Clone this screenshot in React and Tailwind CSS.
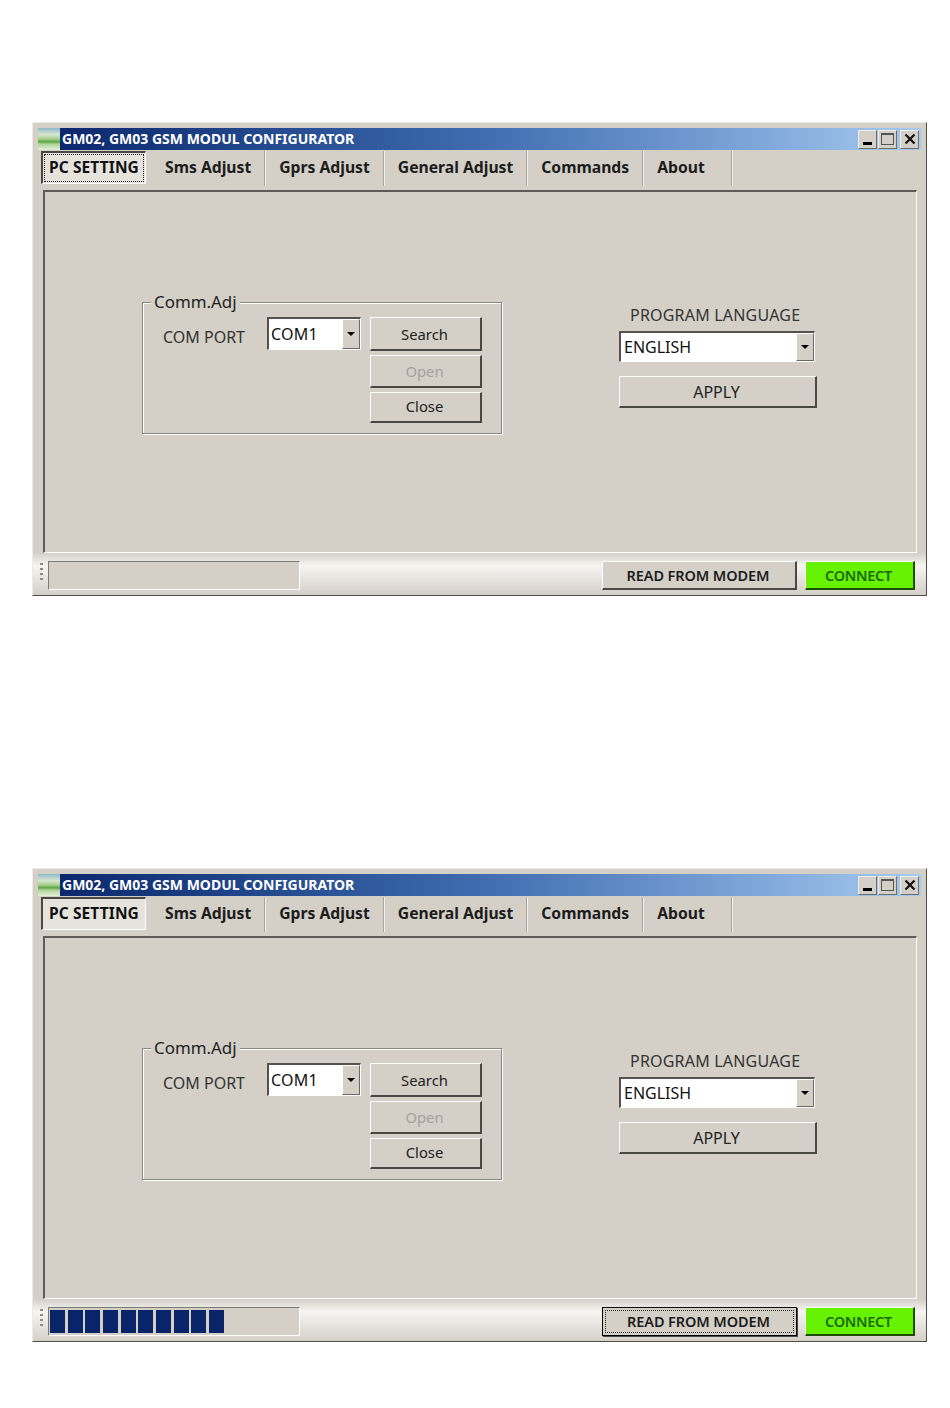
import React from 'react';

const tabs = [
  { label: 'Sms Adjust', pad: 'pl-[14px] pr-[13px]' },
  { label: 'Gprs Adjust', pad: 'pl-[14px] pr-[13px]' },
  { label: 'General Adjust', pad: 'pl-[14px] pr-[13px]' },
  { label: 'Commands', pad: 'pl-[14px] pr-[13px]' },
  { label: 'About', pad: 'pl-[14px] pr-[26px]' },
];
const raised = 'border-t border-l border-t-white border-l-white border-r-2 border-b-2 border-r-[#4a4845] border-b-[#4a4845]';
const font = 'font-["Noto_Sans",sans-serif]';

function AppIcon() {
  return (
    <svg width="22" height="22" viewBox="0 0 22 22" className="shrink-0">
      <defs>
        <linearGradient id="appicon" x1="0" y1="0" x2="0" y2="1">
          <stop offset="0" stopColor="#8fb8c8" />
          <stop offset="0.3" stopColor="#d6e6cf" />
          <stop offset="0.5" stopColor="#a8d08c" />
          <stop offset="0.62" stopColor="#5fa845" />
          <stop offset="0.75" stopColor="#b4d6a0" />
          <stop offset="1" stopColor="#e2efd8" />
        </linearGradient>
      </defs>
      <rect width="22" height="22" fill="url(#appicon)" />
    </svg>
  );
}

function CaptionButton({ children, className = '' }) {
  return (
    <div className={`w-[19px] h-[19px] flex items-center justify-center bg-[#d4d0c8] border-t border-l border-t-[#f0eeea] border-l-[#f0eeea] border-r border-b border-r-[#6f6d69] border-b-[#6f6d69] ${className}`}>
      {children}
    </div>
  );
}

function TitleBar() {
  return (
    <div className="h-[22px] flex items-center bg-gradient-to-r from-[#0a246a] via-[#3f6cb0] via-50% to-[#a6caf0]">
      <AppIcon />
      <span className="ml-[2px] text-white font-bold text-[14px] leading-none">GM02, GM03 GSM MODUL CONFIGURATOR</span>
      <div className="ml-auto mr-[2px] flex items-center gap-[1px]">
        <CaptionButton>
          <div className="w-[9px] h-[3px] bg-black mt-[8px]" />
        </CaptionButton>
        <CaptionButton>
          <div className="w-[13px] h-[12px] border border-[#555] border-t-2" />
        </CaptionButton>
        <CaptionButton className="ml-[2px]">
          <svg width="12" height="12" viewBox="0 0 12 12">
            <path d="M1.5 1.5 L10.5 10.5 M10.5 1.5 L1.5 10.5" stroke="#111" strokeWidth="2.2" />
          </svg>
        </CaptionButton>
      </div>
    </div>
  );
}

function TabBar({ dotted }) {
  return (
    <div className="h-[36px] flex items-start pt-px">
      <div className="ml-[3px] w-[105px] h-[33px] p-px bg-[#e6e3dd] border-t-2 border-l-2 border-t-[#4a4845] border-l-[#4a4845] border-r border-b border-r-white border-b-white">
        <div className={`h-full flex items-center justify-center border border-dotted ${dotted ? 'border-[#222]' : 'border-transparent'} text-[15.5px] font-bold text-[#111] tracking-[0.1px]`}>
          PC SETTING
        </div>
      </div>
      <div className="w-[5px]" />
      {tabs.map(t => (
        <div key={t.label} className={`h-[35px] pb-[2px] ${t.pad} flex items-center border-r border-r-[#a9a59d] shadow-[1px_0_0_#f2f0ec] text-[15.7px] font-bold text-[#1c1c1c]`}>
          {t.label}
        </div>
      ))}
    </div>
  );
}

function Combo({ label, w, h, textClass = '' }) {
  return (
    <div className={`${w} ${h} flex items-stretch bg-white border-t-2 border-l-2 border-t-[#55524e] border-l-[#55524e] border-b border-r border-b-white border-r-white`}>
      <span className={`flex-1 flex items-center text-[16px] text-[#111] leading-none ${textClass}`}>{label}</span>
      <div className="w-[18px] flex items-center justify-center bg-[#d4d0c8] border border-[#6b6964] border-t-white border-l-white">
        <div className="w-0 h-0 border-x-[4px] border-x-transparent border-t-[4px] border-t-black" />
      </div>
    </div>
  );
}

function Btn({ children, w, h, className = '' }) {
  return (
    <div className={`${w} ${h} flex items-center justify-center bg-[#d4d0c8] ${raised} text-[14.8px] text-[#222] ${className}`}>
      {children}
    </div>
  );
}

function CommGroup() {
  return (
    <div className="relative w-[361px] h-[133px] border border-t-[#8a8782] border-l-[#8a8782] border-r-white border-b-white shadow-[inset_-1px_-1px_0_#8a8782,inset_1px_1px_0_#fff] flex items-start pt-[14px] pl-[20px]">
      <span className="absolute left-[8px] top-[-12px] px-[3px] bg-[#d4d0c8] text-[16.9px] leading-[22px] text-[#222]">Comm.Adj</span>
      <span className="w-[104px] mt-[9px] text-[16px] leading-[22px] text-[#333]">COM PORT</span>
      <Combo label="COM1" w="w-[94px]" h="h-[33px]" textClass="pl-[2px] tracking-[0.2px]" />
      <div className="ml-[9px] flex flex-col gap-[4px]">
        <Btn w="w-[112px]" h="h-[34px]" className="pt-[1px] pr-[2px]">Search</Btn>
        <Btn w="w-[112px]" h="h-[33px]" className="!text-[#a5a29c] pr-[2px]">Open</Btn>
        <Btn w="w-[112px]" h="h-[31px]" className="pr-[2px] pb-[1px]">Close</Btn>
      </div>
    </div>
  );
}

function LanguageColumn() {
  return (
    <div className="ml-[116px] mt-[2px] w-[198px] flex flex-col">
      <span className="pl-[11px] text-[16px] leading-[22px] text-[#333] tracking-[0.2px]">PROGRAM LANGUAGE</span>
      <div className="mt-[5px]">
        <Combo label="ENGLISH" w="w-[196px]" h="h-[31px]" textClass="pl-[3px]" />
      </div>
      <Btn w="w-[198px]" h="h-[32px]" className="mt-[14px] !text-[16px] pt-[1px] pr-[2px]">APPLY</Btn>
    </div>
  );
}

function StatusBar({ progress, readFocused }) {
  return (
    <div className="h-[42px] flex items-start pt-[8px] bg-gradient-to-b from-[#d4d0c8] via-[#f6f5f2] via-30% to-[#d4d0c8]">
      <div className="w-[12px] ml-[3px] pr-[2px] mt-[2px] flex flex-col gap-[3px] items-center">
        {[0, 1, 2, 3].map(i => <div key={i} className="w-[3px] h-[2px] bg-[#8d8a84]" />)}
      </div>
      <div className="w-[252px] h-[29px] flex items-center gap-[2.67px] pl-[1px] bg-[#d4d0c8] border-t border-l border-t-[#7c7a75] border-l-[#7c7a75] border-r border-b border-r-white border-b-white">
        {Array.from({ length: progress }).map((_, i) => (
          <div key={i} className="w-[15px] h-[23px] bg-[#0a246a]" />
        ))}
      </div>
      {readFocused ? (
        <div className="ml-[302px] w-[195px] h-[29px] p-[2px] bg-[#d4d0c8] border border-black shadow-[1px_1px_0_#4a4845]">
          <div className="h-full flex items-center justify-center pr-[2px] pt-[1px] border border-dotted border-[#222] text-[14.5px] font-semibold text-[#1c1c1c] tracking-[-0.1px]">
            READ FROM MODEM
          </div>
        </div>
      ) : (
        <Btn w="w-[195px]" h="h-[29px]" className="ml-[302px] pr-[2px] pt-[1px] !text-[14.5px] font-semibold !text-[#1c1c1c] tracking-[-0.1px]">READ FROM MODEM</Btn>
      )}
      <div className={`ml-[8px] w-[110px] h-[29px] pr-[2px] pt-[1px] flex items-center justify-center bg-[#66f200] ${raised} !border-r-[#1f4d00] !border-b-[#1f4d00] text-[14.5px] font-semibold text-[#1e6b10] tracking-[-0.3px]`}>
        CONNECT
      </div>
    </div>
  );
}

function Window({ dotted, progress, readFocused, className = '' }) {
  return (
    <div className={`w-[895px] h-[474px] flex flex-col pt-[5px] pl-[5px] pr-[5px] bg-[#d4d0c8] border-t border-l border-t-[#ecebe7] border-l-[#ecebe7] border-r border-b border-r-[#4f4d49] border-b-[#4f4d49] ${className}`}>
      <TitleBar />
      <TabBar dotted={dotted} />
      <div className="ml-[5px] mt-[4px] w-[874px] h-[364px] flex items-start pt-[110px] pl-[97px] border-t-2 border-l-2 border-t-[#5f5c58] border-l-[#5f5c58] border-r border-b border-r-white border-b-white">
        <CommGroup />
        <LanguageColumn />
      </div>
      <div className="-mx-[5px]">
        <StatusBar progress={progress} readFocused={readFocused} />
      </div>
    </div>
  );
}

export default function App() {
  return (
    <div className={`w-[950px] h-[1408px] bg-white pt-[122px] pl-[32px] ${font}`}>
      <Window dotted progress={0} />
      <Window progress={10} readFocused className="mt-[272px]" />
    </div>
  );
}
